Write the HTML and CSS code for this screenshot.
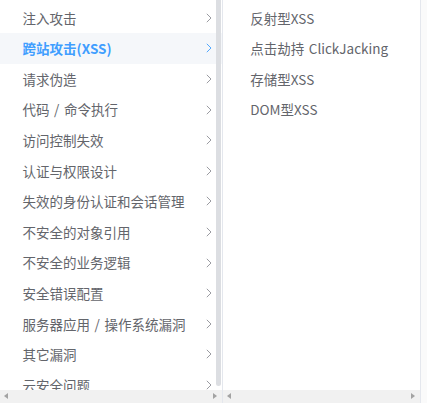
FILE: index.html
```html
<!DOCTYPE html>
<html lang="zh">
<head>
<meta charset="utf-8">
<link rel="stylesheet" href="styles.css">
</head>
<body>
<div class="panel">
  <div class="menu menu-main">
    <div class="viewport">
      <ul class="list list-main">
        <li class="node"><span class="label">注入攻击</span><svg class="chev" viewBox="0 0 6 10"><polyline points="0.8,0.8 5,5 0.8,9.2"/></svg></li>
        <li class="node active"><span class="label">跨站攻击(XSS)</span><svg class="chev" viewBox="0 0 6 10"><polyline points="0.8,0.8 5,5 0.8,9.2"/></svg></li>
        <li class="node"><span class="label">请求伪造</span><svg class="chev" viewBox="0 0 6 10"><polyline points="0.8,0.8 5,5 0.8,9.2"/></svg></li>
        <li class="node"><span class="label">代码 / 命令执行</span><svg class="chev" viewBox="0 0 6 10"><polyline points="0.8,0.8 5,5 0.8,9.2"/></svg></li>
        <li class="node"><span class="label">访问控制失效</span><svg class="chev" viewBox="0 0 6 10"><polyline points="0.8,0.8 5,5 0.8,9.2"/></svg></li>
        <li class="node"><span class="label">认证与权限设计</span><svg class="chev" viewBox="0 0 6 10"><polyline points="0.8,0.8 5,5 0.8,9.2"/></svg></li>
        <li class="node"><span class="label">失效的身份认证和会话管理</span><svg class="chev" viewBox="0 0 6 10"><polyline points="0.8,0.8 5,5 0.8,9.2"/></svg></li>
        <li class="node"><span class="label">不安全的对象引用</span><svg class="chev" viewBox="0 0 6 10"><polyline points="0.8,0.8 5,5 0.8,9.2"/></svg></li>
        <li class="node"><span class="label">不安全的业务逻辑</span><svg class="chev" viewBox="0 0 6 10"><polyline points="0.8,0.8 5,5 0.8,9.2"/></svg></li>
        <li class="node"><span class="label">安全错误配置</span><svg class="chev" viewBox="0 0 6 10"><polyline points="0.8,0.8 5,5 0.8,9.2"/></svg></li>
        <li class="node"><span class="label">服务器应用 / 操作系统漏洞</span><svg class="chev" viewBox="0 0 6 10"><polyline points="0.8,0.8 5,5 0.8,9.2"/></svg></li>
        <li class="node"><span class="label">其它漏洞</span><svg class="chev" viewBox="0 0 6 10"><polyline points="0.8,0.8 5,5 0.8,9.2"/></svg></li>
        <li class="node"><span class="label">云安全问题</span><svg class="chev" viewBox="0 0 6 10"><polyline points="0.8,0.8 5,5 0.8,9.2"/></svg></li>
      </ul>
      <div class="vthumb"></div>
    </div>
    <div class="hbar">
      <span class="arrow arrow-left"></span>
      <span class="arrow arrow-right"></span>
    </div>
  </div>
  <div class="menu menu-sub">
    <div class="viewport">
      <ul class="list list-sub">
        <li class="node"><span class="label">反射型XSS</span></li>
        <li class="node"><span class="label">点击劫持 ClickJacking</span></li>
        <li class="node"><span class="label">存储型XSS</span></li>
        <li class="node"><span class="label">DOM型XSS</span></li>
      </ul>
    </div>
    <div class="hbar">
      <span class="arrow arrow-left"></span>
      <span class="arrow arrow-right"></span>
    </div>
  </div>
</div>
</body>
</html>
```

FILE: styles.css
```css
html, body {
  margin: 0;
  padding: 0;
  background: #fafafa;
}

body {
  width: 427px;
  height: 403px;
  overflow: hidden;
  font-family: "Microsoft YaHei", "Noto Sans CJK SC", "Noto Sans", sans-serif;
  font-size: 13.5px;
  color: #63656b;
}

.panel {
  display: flex;
  height: 403px;
  width: 421px;
  background: #fff;
}

.menu {
  display: flex;
  flex-direction: column;
  height: 403px;
  border-right: 1px solid #e4e7ed;
  box-sizing: border-box;
}

.menu-main {
  width: 223px;
}

.menu-sub {
  width: 198px;
}

.viewport {
  position: relative;
  flex: 1;
  overflow: hidden;
}

.list {
  list-style: none;
  margin: 0;
  padding: 2.6px 0 0 0;
}

.node {
  display: flex;
  align-items: center;
  height: 30.6px;
  white-space: nowrap;
  word-spacing: 1.5px;
}

.list-main .node {
  padding-left: 22.6px;
}

.list-sub .node {
  padding-left: 27.3px;
}

.label {
  flex: 1;
  line-height: 30.6px;
}

.chev {
  width: 6px;
  height: 10px;
  margin-right: 10px;
  fill: none;
  stroke: #8e9096;
  stroke-width: 0.9;
}

.node.active {
  background: #f5f7fa;
  color: #409eff;
  font-weight: bold;
}

.node.active .chev {
  stroke: #409eff;
}

.vthumb {
  position: absolute;
  left: 216px;
  top: -4px;
  width: 5px;
  height: 390px;
  border-radius: 3px;
  background: #dcdee2;
}

.hbar {
  position: relative;
  flex: 0 0 13px;
  height: 13px;
  background: #f1f1f1;
}

.arrow {
  position: absolute;
  top: 3px;
  width: 0;
  height: 0;
  border-top: 3.5px solid transparent;
  border-bottom: 3.5px solid transparent;
}

.arrow-left {
  left: 4px;
  border-right: 4px solid #a3a3a3;
}

.arrow-right {
  right: 5px;
  border-left: 4px solid #a3a3a3;
}
```
